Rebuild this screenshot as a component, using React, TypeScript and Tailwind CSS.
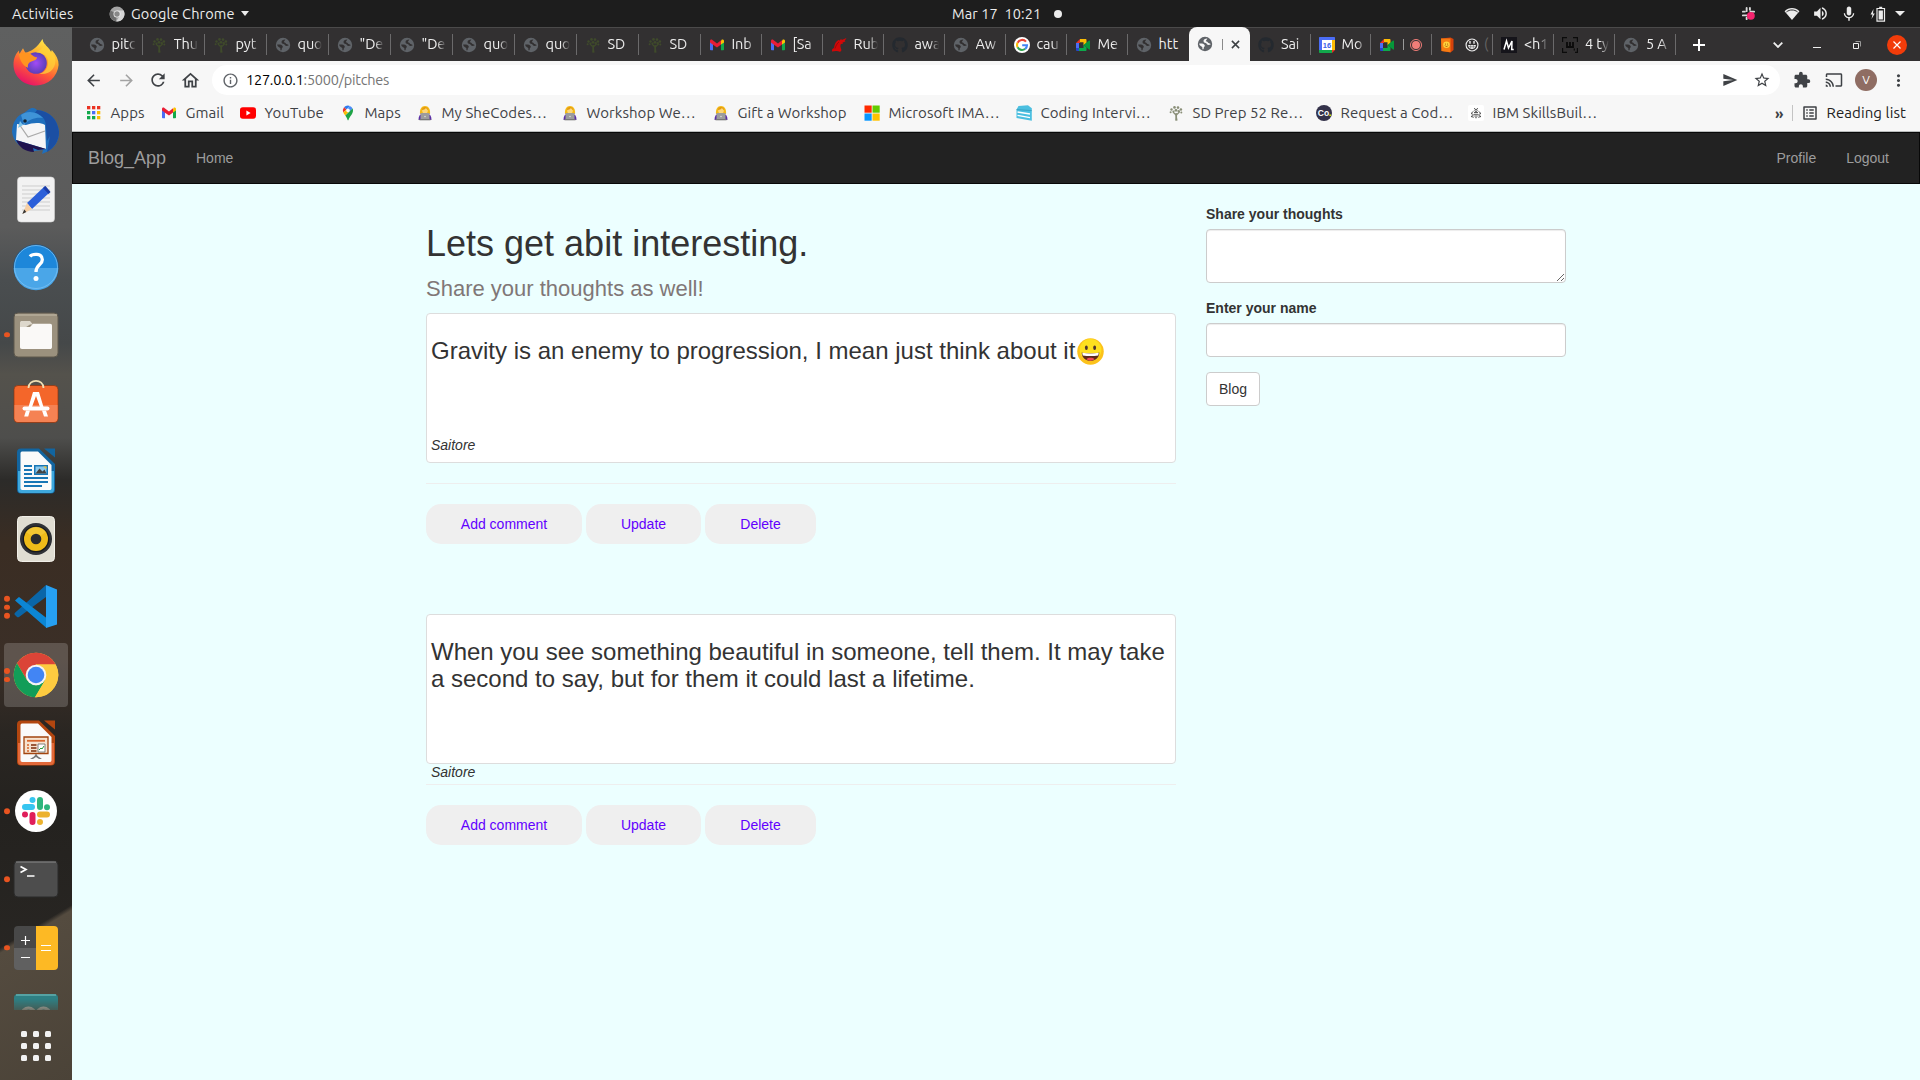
import React from "react";
import {
  MdArrowBack, MdArrowForward, MdRefresh, MdOutlineHome, MdInfoOutline, MdSend, MdStarBorder,
  MdExtension, MdCast, MdMoreVert, MdListAlt, MdMic, MdVolumeUp,
} from "react-icons/md";
import { FaGithub } from "react-icons/fa";

type P = { className?: string };

const Globe = ({ className = "text-[#323031]" }: P) => (
  <svg viewBox="0 0 16 16" className={`size-4 shrink-0 ${className}`}>
    <circle cx="8" cy="8" r="7.2" fill="#5f6368" />
    <path d="M10.300 2.600C8 2.700 6.400 3.700 6.500 5.200c.1 1.700 2.300 1.300 3 2.400.4.700.9 1.500 2 1.500.9 0 1.700-.3 2.300-.8-.5-.9-1.500-.8-2.200-1.300-.8-.6-.9-1.400-2-1.600-.8-.2-.9-.7-.3-1.100z" fill="currentColor" />
    <path d="M2.200 7.500c1.800.1 3.800-.1 4.900.9.900.8.900 1.700.2 2.300-.8.600-.4 1.400-.7 2.200-.2.400-.6.600-1 .4-.5-.8 0-1.700-.4-2.400-.5-.8-2.900-.8-3-3.400z" fill="currentColor" />
  </svg>
);

const Tree = ({ className = "text-[#3f4a2b]" }: P) => (
  <svg viewBox="0 0 16 16" className={`size-4 shrink-0 ${className}`}>
    <g fill="currentColor">
      <circle cx="3.500" cy="4.500" r="1.200" /><circle cx="6.500" cy="2.400" r="1.300" /><circle cx="10" cy="2.600" r="1.300" />
      <circle cx="12.900" cy="4.500" r="1.300" /><circle cx="2.600" cy="7.200" r="1" /><circle cx="13.300" cy="7.400" r="1" />
      <circle cx="8" cy="5.300" r="1.400" /><circle cx="5.500" cy="6.500" r="1.100" /><circle cx="10.800" cy="6.300" r="1.200" />
    </g>
    <path d="M8.200 15.500V8M8 10 5 7M8.300 10l3.200-3" stroke="currentColor" strokeWidth="1.200" fill="none" />
    <path d="M7.200 15.600c.5-2.500.3-4.500.1-6.600h1.800c-.2 2.200-.1 4.500.5 6.600z" fill="currentColor" />
  </svg>
);

const Gmail = () => (
  <svg viewBox="0 0 16 16" className="size-4 shrink-0">
    <path d="M1 4v8.500c0 .5.300.8.800.8H4V7z" fill="#4a6cf5" />
    <path d="M15 4v8.500c0 .5-.3.800-.8.800H12V7z" fill="#12a84b" />
    <path d="M12 4v3.600l3-2.200V4c0-1.400-1.500-1.900-2.400-1.200z" fill="#fbc004" />
    <path d="M1 4v1.400l3 2.300L8 10.500l4-2.900V3.300L8 6.400 3.400 2.900C2.500 2.200 1 2.700 1 4z" fill="#ea1d35" />
  </svg>
);

const Ruby = () => (
  <svg viewBox="0 0 16 16" className="size-4 shrink-0">
    <path d="M1 14.500c-.2-2 .6-3 2-3.400C3.500 7 5 4 8 2.800l.4 1 1.800-2 .5 1.300L15.500 1l-2 3.200 1.300.4-3.200 1 .3 1.200-2 .3c-.9 1.600-.4 3.600.4 5.400.3 1-.3 2-1.600 2.200-1.200-.5-2.300-.9-3.700-.7-1.500.1-2.900.5-4 .5z" fill="#d00808" />
    <path d="M4 11.500c1-3 2-5 4-6.500" stroke="#7d0505" strokeWidth=".6" fill="none" />
  </svg>
);

const Google = () => (
  <svg viewBox="0 0 16 16" className="size-4 shrink-0">
    <circle cx="8" cy="8" r="8" fill="#fff" />
    <g fill="none" strokeWidth="2.100">
      <path d="M12 4.700A5 5 0 0 0 3.600 5.800" stroke="#ea4335" />
      <path d="M3.600 5.800a5 5 0 0 0 0 4.500" stroke="#fbbc05" />
      <path d="M3.600 10.300a5 5 0 0 0 7.600 1.500" stroke="#34a853" />
      <path d="M11.200 11.800A4.600 4.600 0 0 0 13 8.200H8.200" stroke="#4285f4" />
    </g>
  </svg>
);

const Meet = () => (
  <svg viewBox="0 0 16 16" className="size-4 shrink-0">
    <path d="M1 6 5 2v4z" fill="#ea3323" />
    <path d="M1 6h3v5H1z" fill="#4b6df6" />
    <path d="M1 11h3v3H2a1 1 0 0 1-1-1z" fill="#2747c9" />
    <path d="M5 2h5.500c.6 0 1 .4 1 1v3l-3 2.500V5.300H5z" fill="#fbbc04" />
    <path d="M4 11h4.500V8l3 2.500V13c0 .6-.4 1-1 1H4z" fill="#0da94b" />
    <path d="M8.500 8 14 3.500c.4-.3 1 0 1 .4v8.200c0 .5-.6.700-1 .4z" fill="#06973a" />
  </svg>
);

const CalIcon = () => (
  <svg viewBox="0 0 16 16" className="size-4 shrink-0">
    <path d="M0 1c0-.6.4-1 1-1h14c.6 0 1 .4 1 1v2H0z" fill="#4b6df6" />
    <path d="M0 3h3v10H0z" fill="#4b6df6" /><path d="M13 3h3v10h-3z" fill="#fbbc04" />
    <path d="M0 13h13v3H1c-.6 0-1-.4-1-1z" fill="#12a84b" /><path d="M13 13h3l-3 3z" fill="#ea3323" />
    <path d="M3 3h10v10H3z" fill="#fff" />
    <text x="8" y="10.800" fontSize="7.500" fontWeight="700" textAnchor="middle" fill="#3b62e8" fontFamily="Liberation Sans">16</text>
  </svg>
);

const Book = () => (
  <svg viewBox="0 0 16 16" className="size-4 shrink-0">
    <path d="M2 1.500 11.500.5 14.500 2v11l-3 2.500L2.500 14z" fill="#d6420b" />
    <path d="M2 1.500h9.500v13.700L2.500 14z" fill="#f57c12" />
    <circle cx="7.500" cy="7.800" r="3.300" fill="#ffd23b" />
    <path d="M6 8.500c.5 1.300 2.500 1.300 3 0" stroke="#8d3b00" strokeWidth=".7" fill="none" />
    <circle cx="6.500" cy="7" r=".5" fill="#8d3b00" /><circle cx="8.600" cy="7" r=".5" fill="#8d3b00" />
  </svg>
);

const MIcon = () => (
  <svg viewBox="0 0 16 16" className="size-4 shrink-0">
    <path d="M0 0h16v16H0z" fill="#15141a" />
    <path d="M3 12.500 5.500 4 7.500 11 11 4l-.3 8.500h2" stroke="#fff" strokeWidth="1.500" fill="none" />
  </svg>
);

const WIcon = () => (
  <svg viewBox="0 0 16 16" className="size-4 shrink-0" fill="none" stroke="#0b0b0b" strokeWidth="1.200">
    <path d="M.6 5V.6H5M11 .6h4.400V5M15.400 11v4.400H13M5 15.400H.6V11" />
    <path d="M5 5v5h6V5M8 5v5" strokeWidth="1.800" /><path d="M12.300 11.500v2" />
  </svg>
);

const Laughing = () => (
  <svg viewBox="0 0 16 16" className="size-3.5 shrink-0">
    <circle cx="8" cy="8" r="6.800" fill="none" stroke="#eee" strokeWidth="1.300" />
    <path d="M3.500 8h9c-.2 3-2 4.500-4.500 4.500S3.700 11 3.500 8z" fill="#eee" />
    <path d="M5.700 3.500v3M10.300 3.500v3" stroke="#eee" strokeWidth="1.600" />
    <path d="M4 10h8M6.500 8v4M9.500 8v4" stroke="#333" strokeWidth=".5" />
  </svg>
);

const Coder = () => (
  <svg viewBox="0 0 16 16" className="size-4 shrink-0">
    <path d="M3 9C2.500 4 4.500 1 8 1s5.500 3 5 8z" fill="#f4b916" />
    <circle cx="8" cy="5.800" r="2.800" fill="#fcd77d" />
    <path d="M4.800 5c2 0 3.500-1 4.200-2.300.5 1.300 1.300 2 2.300 2.300C11 3 9.500 2 8 2S5 3 4.800 5z" fill="#e49a10" />
    <path d="M1.500 15c0-4 1.500-6 3.500-6h6c2 0 3.500 2 3.500 6z" fill="#5a2ea6" />
    <path d="M3.500 8h9v7h-9z" fill="#9c9c9c" /><path d="M2.500 14h11v1.300h-11z" fill="#777" />
    <circle cx="8" cy="11.500" r=".8" fill="#ddd" />
  </svg>
);

const AppsDots = () => {
  const c = ["#ea3323", "#ea3323", "#ea3323", "#12a84b", "#4b6df6", "#fbbc04", "#12a84b", "#12a84b", "#fbbc04"];
  return (
    <svg viewBox="0 0 16 16" className="size-4 shrink-0">
      {c.map((f, i) => <rect key={i} x={1 + (i % 3) * 5} y={1 + Math.floor(i / 3) * 5} width="3.300" height="3.300" fill={f} />)}
    </svg>
  );
};

const YouTube = () => (
  <svg viewBox="0 0 16 16" className="size-4 shrink-0">
    <rect x="0" y="2.300" width="16" height="11.500" rx="2.800" fill="#f00" /><path d="M6.400 5.600v4.900L10.600 8z" fill="#fff" />
  </svg>
);

const MapsPin = () => (
  <svg viewBox="0 0 16 16" className="size-4 shrink-0">
    <path d="M8 .5A5 5 0 0 0 4 2.300l2.500 2.100L9.800 1A5 5 0 0 0 8 .5z" fill="#2f7bf0" />
    <path d="M4 2.300A5.400 5.400 0 0 0 3.300 7.500l3.200-3.100z" fill="#e8352b" />
    <path d="M9.800.9 6.500 4.400 9.600 6.900l3-3.500A5 5 0 0 0 9.800.9z" fill="#4b8df8" />
    <path d="M3.300 7.500c.4 1 1.200 2 2 3l4.300-4.800-3.100-1.300z" fill="#fbbc04" />
    <path d="M5.300 10.500c1.200 1.600 1.800 2.800 2.200 4.300.2.700.9.700 1.100 0C9.600 11 13 9.300 13 5.400c0-.7-.1-1.400-.4-2z" fill="#1ea446" />
    <circle cx="8" cy="5.400" r="1.800" fill="#fff" />
  </svg>
);

const Microsoft = () => (
  <svg viewBox="0 0 16 16" className="size-4 shrink-0">
    <path d="M.5.500h7.200v7.200H.5z" fill="#ff2a00" /><path d="M8.500.500h7.200v7.200H8.500z" fill="#62cc00" />
    <path d="M.5 8.500h7.200v7.200H.5z" fill="#0a97ff" /><path d="M8.500 8.500h7.200v7.200H8.500z" fill="#ffc200" />
  </svg>
);

const Coding = () => (
  <svg viewBox="0 0 16 16" className="size-4 shrink-0">
    <path d="M.5 4.500 2.500 1 12 .200l3.800 3v12.600L.5 13z" fill="#4bbfe0" />
    <path d="M1.500 7l12.500 2M1.500 10.300l12.500 2.300" stroke="#fff" strokeWidth="1.300" /><path d="M.5 4.600 15.800 5.600" stroke="#2d8fae" strokeWidth=".6" />
  </svg>
);

const CoIcon = () => (
  <svg viewBox="0 0 16 16" className="size-4 shrink-0">
    <circle cx="8" cy="8" r="8" fill="#34324a" />
    <text x="7.500" y="11" fontSize="8.500" fontWeight="700" textAnchor="middle" fill="#fff" fontFamily="Liberation Sans">Co</text>
    <path d="M13.300 9.500h1.700v1.500h-1.700z" fill="#c8e600" />
  </svg>
);

const Bee = () => (
  <svg viewBox="0 0 16 16" className="size-4 shrink-0">
    <rect width="16" height="16" rx="2" fill="#fff" />
    <g fill="none" stroke="#444" strokeWidth=".9">
      <path d="M6.300 3 7.300 4.500M9.700 3 8.700 4.500" /><circle cx="8" cy="5.500" r="1.100" />
      <path d="M6 7.500h4M6 9.300h4M6.300 11h3.400M7.200 12.700h1.600" /><path d="M5.500 6.300 3 8.500l2.500 1M10.500 6.300 13 8.500l-2.500 1M5.500 10.300 3 11.500l2.800.8M10.500 10.300 13 11.500l-2.800.8" />
    </g>
  </svg>
);

type Tab = { icon: React.ReactNode; label: string; w?: string };
const dim = <Globe />;
const firstTabs: Tab[] = [
  { icon: dim, label: "pitc" }, { icon: <Tree />, label: "Thu" }, { icon: <Tree />, label: "pyt" },
  { icon: dim, label: "quo" }, { icon: dim, label: "\"De" }, { icon: dim, label: "\"De" },
  { icon: dim, label: "quo" }, { icon: dim, label: "quo" }, { icon: <Tree />, label: "SD" }, { icon: <Tree />, label: "SD" },
];
const midTabs: Tab[] = [
  { icon: <Gmail />, label: "Inb" }, { icon: <Gmail />, label: "[Sa" }, { icon: <Ruby />, label: "Rub" },
  { icon: <FaGithub className="size-4 shrink-0 text-[#24292f]" />, label: "awa" }, { icon: dim, label: "Aw" },
  { icon: <Google />, label: "cau" }, { icon: <Meet />, label: "Me" },
];
const lastTabs: Tab[] = [
  { icon: <FaGithub className="size-4 shrink-0 text-[#24292f]" />, label: "Sai" },
  { icon: <CalIcon />, label: "Mo" },
];

function TabItem({ icon, label, w = "w-[61px]" }: Tab) {
  return (
    <div className={`flex h-full shrink-0 items-center pl-[8px] ${w}`}>
      {icon}
      <span className="-mt-px ml-[7px] w-[25px] overflow-hidden whitespace-nowrap text-[14.5px] tracking-[-0.1px] text-[#eeeeee] [mask-image:linear-gradient(to_right,black_60%,transparent_96%)]">{label}</span>
      <span className="ml-auto h-[21px] w-px bg-[#6b6a6b]" />
    </div>
  );
}

function TopBar() {
  return (
    <div className="grid h-[27px] grid-cols-3 items-center bg-[#1d1d1d] text-[14.5px] text-[#ececec]">
      <div className="flex items-center pl-3">
        <span className="w-[97px] tracking-[0.2px]">Activities</span>
        <svg viewBox="0 0 16 16" className="size-4">
          <circle cx="8" cy="8" r="7.500" fill="#a5a5a5" /><path d="M8 8 1.500 4.500A7.500 7.500 0 0 0 7 15.400z" fill="#6e6e6e" />
          <path d="M8 4.600h6.700a7.500 7.500 0 0 1-7.500 10.800L11 9.500z" fill="#d6d6d6" /><circle cx="8" cy="8" r="3.500" fill="#eee" /><circle cx="8" cy="8" r="2.700" fill="#888" />
        </svg>
        <span className="ml-[6px] whitespace-nowrap tracking-[0.15px]">Google Chrome</span>
        <span className="ml-[6px] border-x-[4.5px] border-t-[5px] border-x-transparent border-t-[#ececec]" />
      </div>
      <div className="flex items-center pl-[312px]">
        <span className="whitespace-pre tracking-[0.08px]">Mar 17  10:21</span>
        <span className="ml-[13px] size-2 rounded-full bg-[#ececec]" />
      </div>
      <div className="flex items-center justify-end pr-[15px]">
        <svg viewBox="0 0 16 16" className="mr-[28px] size-[15px]">
          <g stroke="#d9d9d9" strokeWidth="2" strokeLinecap="round"><path d="M6 2v3.500M2 6h2M9.500 2v2M10 6H14M2 10h4M6 12.500V14" /></g>
          <circle cx="10.500" cy="10.500" r="4.200" fill="#f5246e" />
        </svg>
        <svg viewBox="0 0 16 14" className="h-[13px] w-[16px]"><path d="M0 4.500C4.500 0 11.500 0 16 4.500L8 14z" fill="#ececec" /><path d="M2 5.300c3.600-2.800 8.400-2.800 12 0" stroke="#1d1d1d" fill="none" /></svg>
        <MdVolumeUp className="ml-3 size-[17px]" />
        <MdMic className="ml-[11px] size-[18px]" />
        <svg viewBox="0 0 16 16" className="ml-3 size-[16px]"><path d="M3.500 3 .500 8.500H2.500L1.500 13 4.800 7.500H3z" fill="#ececec" /><path d="M7 2.500h7.500v12.700H7z" fill="none" stroke="#ececec" strokeWidth="1.200" /><path d="M8.600 4.500h4.300v9H8.600zM9.200.800h3v1.500h-3z" fill="#ececec" /></svg>
        <span className="ml-[9px] border-x-[5px] border-t-[5px] border-x-transparent border-t-[#ececec]" />
      </div>
    </div>
  );
}

function TabStrip() {
  return (
    <div className="flex h-[34px] items-center border-t border-[#4b4a4a] bg-[#323031] pl-[8.5px]">
      {firstTabs.map((t, i) => <TabItem key={i} {...t} w="w-[62px]" />)}
      {midTabs.map((t, i) => <TabItem key={i} {...t} />)}
      <div className="flex h-full w-[61.5px] items-center pl-[8px]">
        <Globe />
        <span className="-mt-px ml-[7px] w-[25px] overflow-hidden text-[14.5px] text-[#eee]">htt</span>
      </div>
      <div className="-mt-px flex h-[34px] w-[61px] items-center self-start rounded-t-lg bg-[#f7f7f7] pl-[8px]">
        <Globe className="text-[#f7f7f7]" />
        <span className="ml-[9px] h-[11px] w-px bg-[#8a8a8a]" />
        <svg viewBox="0 0 10 10" className="ml-[8px] size-[9px]"><path d="M1 1l8 8M9 1 1 9" stroke="#3c4043" strokeWidth="1.700" /></svg>
      </div>
      {lastTabs.map((t, i) => <TabItem key={i} {...t} w="w-[60.5px]" />)}
      <div className="flex h-full w-[61px] items-center pl-[8px]">
        <Meet />
        <span className="ml-[8px] h-[11px] w-px bg-[#9a9a9a]" />
        <span className="ml-[6px] flex size-[12px] items-center justify-center rounded-full border border-[#f27d78]"><i className="size-[8px] rounded-full bg-[#f27d78]" /></span>
        <span className="ml-auto h-[21px] w-px bg-[#6b6a6b]" />
      </div>
      <div className="flex h-full w-[61px] items-center pl-[7px]">
        <Book />
        <span className="ml-[10px] flex"><Laughing /></span>
        <span className="ml-[5px] w-[5px] text-[14px] text-[#666]">(</span>
        <span className="ml-auto h-[21px] w-px bg-[#6b6a6b]" />
      </div>
      <TabItem icon={<MIcon />} label="<h1" />
      <TabItem icon={<WIcon />} label="4 ty" />
      <TabItem icon={dim} label="5 A" />
      <svg viewBox="0 0 12 12" className="ml-[17px] size-3"><path d="M6 0v12M0 6h12" stroke="#fff" strokeWidth="2" /></svg>
      <div className="ml-auto flex items-center pr-[13px]">
        <svg viewBox="0 0 10 6" className="h-[6px] w-[10px]"><path d="M.7.700 5 5 9.300.700" stroke="#eee" strokeWidth="1.800" fill="none" /></svg>
        <span className="ml-[30px] mt-[5px] h-px w-[8px] bg-[#eee]" />
        <svg viewBox="0 0 8 8" className="ml-[32px] size-2" fill="none"><path d="M.500 2.500h5v5h-5z" stroke="#eee" /><path d="M2.500.500h5v5" stroke="#999" /></svg>
        <span className="ml-[26px] flex size-5 items-center justify-center rounded-full bg-[#f23c0a]">
          <svg viewBox="0 0 8 8" className="size-2"><path d="M.500.500l7 7M7.500.500l-7 7" stroke="#fff" strokeWidth="1.200" /></svg>
        </span>
      </div>
    </div>
  );
}

function Toolbar() {
  return (
    <div className="flex h-[38px] items-center bg-[#f7f7f7] text-[#3f4246]">
      <MdArrowBack className="ml-[12px] size-[19px]" />
      <MdArrowForward className="ml-[14px] size-[19px] text-[#a3a3a3]" />
      <MdRefresh className="ml-[12px] size-[20px]" />
      <MdOutlineHome className="ml-[12px] size-[21px]" />
      <div className="ml-[11px] flex h-[30px] w-[1568px] items-center rounded-full bg-white text-[14.5px] tracking-[-0.24px]">
        <MdInfoOutline className="ml-[10px] size-[17px] text-[#5f6368]" />
        <span className="ml-[7px] text-black">127.0.0.1</span><span className="text-[#757575]">:5000/pitches</span>
        <MdSend className="ml-auto size-[16px]" />
        <MdStarBorder className="ml-[15px] mr-[9px] size-[18px]" />
      </div>
      <MdExtension className="ml-[13px] size-[18px]" />
      <MdCast className="ml-[14px] size-[18px]" />
      <span className="ml-[12px] flex size-[22px] items-center justify-center rounded-full bg-[#8f6d63] text-[12px] text-white">V</span>
      <MdMoreVert className="ml-[12px] size-[19px]" />
    </div>
  );
}

const bookmarks = [
  { w: "w-[75px]", icon: <AppsDots />, t: "Apps" },
  { w: "w-[79px]", icon: <Gmail />, t: "Gmail" },
  { w: "w-[100px]", icon: <YouTube />, t: "YouTube" },
  { w: "w-[77px]", icon: <MapsPin />, t: "Maps" },
  { w: "w-[145px]", icon: <Coder />, t: "My SheCodes…" },
  { w: "w-[151px]", icon: <Coder />, t: "Workshop We…" },
  { w: "w-[151px]", icon: <Coder />, t: "Gift a Workshop" },
  { w: "w-[152px]", icon: <Microsoft />, t: "Microsoft IMA…" },
  { w: "w-[152px]", icon: <Coding />, t: "Coding Intervi…" },
  { w: "w-[148px]", icon: <Tree className="text-[#8a8f78]" />, t: "SD Prep 52 Re…" },
  { w: "w-[152px]", icon: <CoIcon />, t: "Request a Cod…" },
  { w: "w-[150px]", icon: <Bee />, t: "IBM SkillsBuil…" },
];

function Bookmarks() {
  return (
    <div className="flex h-[33px] items-center border-b border-[#b9bcbc] bg-[#f7f7f7] pl-[14px] pb-[5px] pt-[1px] text-[15px] text-[#3f4246]">
      {bookmarks.map((b, i) => (
        <div key={i} className={`flex shrink-0 items-center whitespace-nowrap ${b.w}`}>
          {b.icon}<span className="ml-[8.5px] tracking-[0.06px]">{b.t}</span>
        </div>
      ))}
      <span className="ml-auto text-[15px] font-bold leading-none">»</span>
      <span className="ml-[9px] h-4 w-px bg-[#c4c4c4]" />
      <MdListAlt className="ml-[8px] size-[18px]" />
      <span className="ml-[7px] mr-[14px] whitespace-nowrap tracking-[0.1px] text-[#222]">Reading list</span>
    </div>
  );
}

const Firefox = () => (
  <svg viewBox="0 0 48 48" className="size-12">
    <defs>
      <linearGradient id="fx" x1=".8" y1="0" x2=".3" y2="1"><stop offset="0" stopColor="#fff44f" /><stop offset=".35" stopColor="#ffb02e" /><stop offset=".65" stopColor="#ff5a36" /><stop offset="1" stopColor="#e6106a" /></linearGradient>
      <radialGradient id="fp"><stop offset="0" stopColor="#a24bf5" /><stop offset="1" stopColor="#5b3fb8" /></radialGradient>
    </defs>
    <path d="M30.500 0c.5 4 3 6 5.500 8.500 1.500 1.500 2.500 3 3 4.500l.8-2c4.500 5 7 10 6.800 15A22.500 22.500 0 0 1 24 46.500C11 46.500 1.500 37 1.500 25.500 1.500 19 4 14.500 7 11.500L7.300 15 11 9.300l2.300 4.500C19 12.500 25 9 30.500 0z" fill="url(#fx)" />
    <circle cx="24" cy="24" r="10.800" fill="url(#fp)" />
    <path d="M7 15c4-2 9-2 13 1 1.500 1.400 4 2.400 5 2.300.3 2-2 3.200-5 4-3.500 1-4.500 3.500-4 6.500C11 27 7.500 21 7 15z" fill="#ff9420" />
    <path d="M24 13.500c8 0 13 4 12 11.500-.8 5-4 8.500-8.500 10C39 36 45 28 43 18c-3-5-8-8-10-13-2 3-4 6-9 8.500z" fill="#ffd23a" opacity=".75" />
  </svg>
);

const Thunderbird = () => (
  <svg viewBox="0 0 48 48" className="size-12">
    <path d="M16 3c4-3 7-2 9 0 13 1 21 10 22 22 0 11-6 18-17 22l1-4-9 1C8 42 1 34 0 25 0 16 5 8 12 6z" fill="#1f6fbd" />
    <path d="M25 3c13 1 21 10 22 22 0 9-5 16-12 20l3-16-3 5-1-14c0-8-4-12-11-14z" fill="#1b4fa3" />
    <path d="M9 8c6-5 16-4 22 3-7-1-14 1-19 7z" fill="#3f94d8" />
    <path d="M5 17 14 18c6-2 14-3 19 0l1 24L4 33z" fill="#f5f5f6" /><path d="m7 17 9 13 17-6" stroke="#aaa" fill="none" strokeWidth="1.300" />
    <path d="M4 33l30 9-8 1-5-2 1 4C13 45 7 40 4 33z" fill="#20134f" /><circle cx="13" cy="14" r="1.800" fill="#123" /><path d="m8 14-2 7 5-3z" fill="#7bc3ea" />
  </svg>
);

const Editor = () => (
  <svg viewBox="0 0 48 48" className="size-12">
    <rect x="5.500" y="2" width="37" height="45" rx="3.500" fill="#f2f2f2" stroke="#d6d6d6" strokeWidth=".6" />
    <path d="M10 11h28M10 15h28M10 19h28M10 23h28M10 27h28M10 31h28M10 35h28" stroke="#cdcdcd" strokeWidth="1" />
    <path d="m33 11 5 6-18 17-5-6z" fill="#2b5fd9" /><path d="m31 13 2.500-2 5 6-2 2z" fill="#1b3da8" /><path d="m15 28 5 6-9.500 5z" fill="#f6cfa5" /><path d="m12.300 34.500 2 2.500-4 2z" fill="#333" />
  </svg>
);

const Help = () => (
  <svg viewBox="0 0 48 48" className="size-12">
    <circle cx="24" cy="24" r="22.300" fill="#1d87da" stroke="#1b4f7c" strokeWidth=".7" /><path d="M1.700 25h44.600A22.300 22.300 0 0 1 1.700 25z" fill="#4aa6e8" />
    <circle cx="24" cy="24" r="21.500" fill="none" stroke="#7bc0f2" strokeWidth=".8" />
    <path d="M18 13.500c2-2.500 12-4 12.300 3C30.500 22 24 21 24 29" stroke="#fff" strokeWidth="3.300" fill="none" /><circle cx="24" cy="35.500" r="2.500" fill="#fff" />
  </svg>
);

const Files = () => (
  <svg viewBox="0 0 48 48" className="size-12">
    <rect x="2" y="2" width="44" height="44" rx="4" fill="#9b917e" stroke="#5e584c" /><path d="M3 4h42" stroke="#c3bba8" strokeWidth="1.200" />
    <path d="M8 12c0-1.500.7-2 2-2h8l3 3.500h-3L8 20z" fill="#ddd8cc" /><path d="M8 16h10l3-3.300h17c1.500 0 2 .8 2 2V36c0 1.500-.8 2-2 2H10c-1.500 0-2-.7-2-2z" fill="#faf9f7" />
  </svg>
);

const Software = () => (
  <svg viewBox="0 0 48 48" className="size-12">
    <rect x="2" y="6.500" width="44" height="37" rx="4" fill="#f4662a" stroke="#8e330f" strokeWidth=".7" />
    <path d="M2.500 26h43v13.500a4 4 0 0 1-4 3.500h-35a4 4 0 0 1-4-3.500z" fill="#f58253" /><path d="M16.500 9c0-9.500 15-9.500 15 0" stroke="#f0dfb4" strokeWidth="1.800" fill="none" />
    <path d="M21 13h6l4.500 15H28L24 17l-4 11h-3.500zM14 31.500h4l-1.800 6h-4zM30 31.500h4l2 6h-4z" fill="#fff" /><rect x="10.500" y="27.500" width="27" height="4" rx="2" fill="#fff" />
  </svg>
);

const DocBase = ({ a, b, children }: { a: string; b: string; children: React.ReactNode }) => (
  <svg viewBox="0 0 48 48" className="size-12">
    <path d="M9 1.500h18L43 17v25.500a4 4 0 0 1-4 4H9a4 4 0 0 1-4-4v-37a4 4 0 0 1 4-4z" fill={a} />
    <path d="M6 24h36v18.500a3.500 3.500 0 0 1-3.500 3.500h-29A3.500 3.500 0 0 1 6 42.500z" fill={b} />
    <path d="M10 4.500h16L39.500 18v23c0 1.500-.8 2-2 2h-27c-1.500 0-2-.7-2-2V6.500c0-1.300.5-2 1.500-2z" fill="#fafafa" />
    <path d="M32 1.500h11v9z" fill={a} />{children}
  </svg>
);
const Writer = () => (
  <DocBase a="#1265a0" b="#3ea8dd">
    <path d="M12 19h8M12 23h8M12 27h8M12 31h24M12 35h24M12 39h18" stroke="#1876b5" strokeWidth="1.900" />
    <path d="M22 18h14v10H22z" fill="#1876b5" /><path d="M23.500 19.500h11v7h-11z" fill="#8ac8ec" /><path d="m23.500 26.500 4-5 3 3 2-2 2 4z" fill="#444" /><path d="M31 19.500h3.500V22z" fill="#f2c230" />
  </DocBase>
);
const Impress = () => (
  <DocBase a="#b3460f" b="#e2693a">
    <path d="M12 18h24v16.500H12z" fill="#f7e3cf" stroke="#a3440f" strokeWidth="1.300" /><path d="M15 21.800h18" stroke="#d8662b" strokeWidth="1.800" />
    <path d="M15 26h2M15 29h2M15 32h2" stroke="#d8662b" strokeWidth="1.700" /><path d="M19 26h5.500M19 29h5.500M19 32h5.500" stroke="#7c2d08" strokeWidth="1.700" />
    <path d="M26 25h7v8h-7z" fill="#fff" stroke="#666" strokeWidth=".8" /><path d="m27 31 2-2 1 1 2-3" stroke="#2a9b3b" fill="none" /><path d="M18 40c3-1.500 5-3 5.500-5h1c.5 2 3 3.500 5.500 5h-3l-3-2-3 2z" fill="#777" />
  </DocBase>
);

const Rhythmbox = () => (
  <svg viewBox="0 0 48 48" className="size-12">
    <rect x="5.500" y="1.500" width="37" height="45" rx="4" fill="#e0ddd2" stroke="#f1efe8" /><circle cx="24" cy="24" r="16" fill="#2f3136" /><circle cx="24" cy="24" r="13.300" fill="#17181c" />
    <circle cx="24" cy="24" r="12" fill="#eebb19" /><path d="M24 24 14 17a12 12 0 0 1 20 0z" fill="#f7d24b" opacity=".5" /><circle cx="24" cy="24" r="5.300" fill="#2a2b2f" />
  </svg>
);

const VSCode = () => (
  <svg viewBox="0 0 48 48" className="size-12">
    <path d="M34 2v12L7 34c-.8.500-1.600.4-2.200-.2L3 32c-.7-.7-.6-1.500 0-2.200z" fill="#0a66a8" />
    <path d="m3 17.500 3-2.800c.7-.5 1.500-.5 2 0L34.500 35v10z" fill="#0c86d4" /><path d="M34 2l11 4.500v35L34 45z" fill="#26a0f2" />
  </svg>
);

const Chrome = () => (
  <svg viewBox="0 0 48 48" className="size-12">
    <circle cx="24" cy="24" r="22.300" fill="#fdcb40" />
    <path d="M24 13.500H43.600A22.300 22.300 0 0 0 5 12.300L14.800 29z" fill="#db4437" />
    <path d="M5 12.300A22.300 22.300 0 0 0 23 46.200L33 29.300 24 34.500 15 29.300z" fill="#129d58" />
    <path d="M24 13.500H43.600A22.300 22.300 0 0 1 23 46.200L33.200 29.200z" fill="#fdcb40" />
    <circle cx="24" cy="24" r="10.300" fill="#f4f4f4" /><circle cx="24" cy="24" r="8.300" fill="#4285f4" />
  </svg>
);

const Slack = () => (
  <svg viewBox="0 0 48 48" className="size-12">
    <circle cx="24" cy="24" r="21" fill="#fff" />
    <g strokeWidth="6" strokeLinecap="round">
      <path d="M13 20h7M20.500 13v.010" stroke="#36c5f0" /><path d="M28 13v7M35 20.300v.010" stroke="#2eb67d" />
      <path d="M28 27.500h7M28 35v.010" stroke="#ecb22e" /><path d="M20.500 28v7M13 27.500v.010" stroke="#e01e5a" />
    </g>
  </svg>
);

const Terminal = () => (
  <svg viewBox="0 0 48 48" className="size-12">
    <rect x="2" y="6" width="44" height="36" rx="4" fill="#4d4d4d" stroke="#2b2b2b" /><path d="M4 7h40" stroke="#8b8b8b" />
    <path d="m8.500 11.500 5.500 3-5.500 3M15 21h7.500" stroke="#fff" strokeWidth="1.700" fill="none" />
  </svg>
);

const Calculator = () => (
  <svg viewBox="0 0 48 48" className="size-12">
    <rect x="2" y="2" width="44" height="44" rx="4" fill="#484848" /><path d="M2 24h22v22H6a4 4 0 0 1-4-4z" fill="#606060" /><path d="M24 2h18a4 4 0 0 1 4 4v36a4 4 0 0 1-4 4H24z" fill="#fdb924" />
    <path d="M9 16.500h9M13.500 12v9M9 33.500h9M29 21.500h10M29 26.500h10" stroke="#fff" strokeWidth="1.200" />
  </svg>
);

const Arduino = () => (
  <svg viewBox="0 0 48 48" className="size-12 [mask-image:linear-gradient(to_bottom,black_15%,transparent_50%)]">
    <rect x="2" y="2" width="44" height="44" rx="4" fill="#2e8084" /><path d="M4 3h40" stroke="#7cc4c2" />
    <circle cx="16.500" cy="22.500" r="6.500" fill="none" stroke="#b5c4be" strokeWidth="3" /><circle cx="31.500" cy="22.500" r="6.500" fill="none" stroke="#b5c4be" strokeWidth="3" />
  </svg>
);

const apps: { icon: React.ReactNode; dots?: number; active?: boolean }[] = [
  { icon: <Firefox /> }, { icon: <Thunderbird /> }, { icon: <Editor /> }, { icon: <Help /> }, { icon: <Files />, dots: 1 },
  { icon: <Software /> }, { icon: <Writer /> }, { icon: <Rhythmbox /> }, { icon: <VSCode />, dots: 3 }, { icon: <Chrome />, dots: 2, active: true },
  { icon: <Impress /> }, { icon: <Slack />, dots: 1 }, { icon: <Terminal />, dots: 1 }, { icon: <Calculator />, dots: 1 }, { icon: <Arduino /> },
];

function Dock() {
  return (
    <div className="flex w-[72px] shrink-0 flex-col bg-[linear-gradient(149deg,transparent_84%,#544b3f_84.5%,#4b4338_100%),linear-gradient(to_bottom,#5f6060_0%,#5b5b5b_19%,#4a4e50_24%,#454849_30%,#54524c_33%,#4e4e4c_39%,#2c2b29_43%,#3a2d23_49%,#3b2f27_60%,#2a2622_67%,#24221f_75%,#2c2926_100%)]">
      <div className="h-[983px] overflow-hidden pt-[1.5px]">
        {apps.map((a, i) => (
          <div key={i} className="relative flex h-[68.08px] items-center justify-center">
            {a.active && <span className="absolute inset-x-1 inset-y-[2px] rounded-[4px] bg-white/18" />}
            {a.dots && (
              <span className="absolute left-[4px] top-1/2 flex -translate-y-1/2 flex-col gap-[3px]">
                {Array.from({ length: a.dots }, (_, n) => <i key={n} className="size-[5.5px] rounded-full bg-[#e95420]" />)}
              </span>
            )}
            <span className="relative">{a.icon}</span>
          </div>
        ))}
      </div>
      <div className="grid grid-cols-3 gap-[6px] self-center pt-[21px]">
        {Array.from({ length: 9 }, (_, n) => <i key={n} className="size-[6px] rounded-[1.5px] bg-[#f2f2f2]" />)}
      </div>
    </div>
  );
}

const Grin = () => (
  <svg viewBox="0 0 28 28" className="ml-[0.5px] inline-block size-[29px] align-[-7px]">
    <circle cx="14" cy="14" r="12.800" fill="#fcc21b" /><circle cx="14" cy="12.500" r="10.500" fill="#fee01f" />
    <ellipse cx="10" cy="10.300" rx="1.400" ry="2.200" fill="#4e342e" /><ellipse cx="18" cy="10.300" rx="1.400" ry="2.200" fill="#4e342e" />
    <path d="M5.500 15c5 1.200 12 1.200 17 0 0 4.800-3.500 8-8.500 8s-8.500-3.200-8.500-8z" fill="#5d2a1a" /><path d="M6 15.200c5 1 11 1 16 0l-.5 2.600c-5 .7-10 .7-15 0z" fill="#fff" /><path d="M10 21.500c2-1.800 6-1.800 8 0-2.200 1.800-5.800 1.800-8 0z" fill="#ef4a55" />
  </svg>
);

function Actions() {
  return (
    <div className="mt-5 flex gap-1 text-[14px] leading-5 text-[#6200ff]">
      <button className="h-10 w-[156px] rounded-[15px] bg-[#efefef]">Add comment</button>
      <button className="h-10 w-[115px] rounded-[15px] bg-[#efefef]">Update</button>
      <button className="h-10 w-[111px] rounded-[15px] bg-[#efefef]">Delete</button>
    </div>
  );
}

function Page() {
  return (
    <div className="flex-1 bg-[#ecffff] font-['Liberation_Sans',Arial,sans-serif] text-[14px] leading-5 text-[#333]">
      <nav className="flex h-[52px] items-center border border-[#080808] bg-[#222] pl-[15px] pr-[30px] text-[#9d9d9d]">
        <span className="w-[108px] text-[18px]">Blog_App</span>
        <span>Home</span>
        <span className="ml-auto">Profile</span>
        <span className="ml-[30px]">Logout</span>
      </nav>
      <div className="mx-auto flex w-[1140px] gap-[30px]">
        <main className="w-[750px]">
          <h1 className="mt-[40px] text-[36px] leading-[40px]">Lets get abit interesting.</h1>
          <p className="mt-[13px] text-[22px] leading-6 text-[#807777]">Share your thoughts as well!</p>
          <section className="mt-[12px] flex h-[150px] flex-col rounded-[4px] border border-[#ddd] bg-white px-1">
            <h3 className="mt-[23px] h-[27px] text-[24px] leading-[27px]">Gravity is an enemy to progression, I mean just think about it<Grin /></h3>
            <em className="mb-[7px] mt-auto">Saitore</em>
          </section>
          <hr className="mt-5 border-[#eee]" />
          <Actions />
          <section className="mt-[70px] flex h-[150px] flex-col rounded-[4px] border border-[#ddd] bg-white px-1">
            <h3 className="mt-[23px] text-[24px] leading-[27px]">When you see something beautiful in someone, tell them. It may take a second to say, but for them it could last a lifetime.</h3>
          </section>
          <em className="block h-5 pl-[5px] leading-[17px]">Saitore</em>
          <hr className="border-[#eee]" />
          <Actions />
        </main>
        <aside className="w-[360px] pt-5">
          <label className="block font-bold">Share your thoughts</label>
          <textarea className="mt-[5px] block h-[54px] w-full resize-y rounded-[4px] border border-[#ccc] bg-white shadow-[inset_0_1px_1px_rgba(0,0,0,0.075)]" />
          <label className="mt-[15px] block font-bold">Enter your name</label>
          <input className="mt-[5px] block h-[34px] w-full rounded-[4px] border border-[#ccc] bg-white shadow-[inset_0_1px_1px_rgba(0,0,0,0.075)]" />
          <button className="mt-[15px] h-[34px] w-[54px] rounded-[4px] border border-[#ccc] bg-white">Blog</button>
        </aside>
      </div>
    </div>
  );
}

export default function App() {
  return (
    <div className="flex h-[1080px] w-[1920px] flex-col overflow-hidden font-['Ubuntu','Noto_Sans',sans-serif]">
      <TopBar />
      <div className="flex min-h-0 flex-1">
        <Dock />
        <div className="flex min-w-0 flex-1 flex-col">
          <TabStrip />
          <Toolbar />
          <Bookmarks />
          <Page />
        </div>
      </div>
    </div>
  );
}
